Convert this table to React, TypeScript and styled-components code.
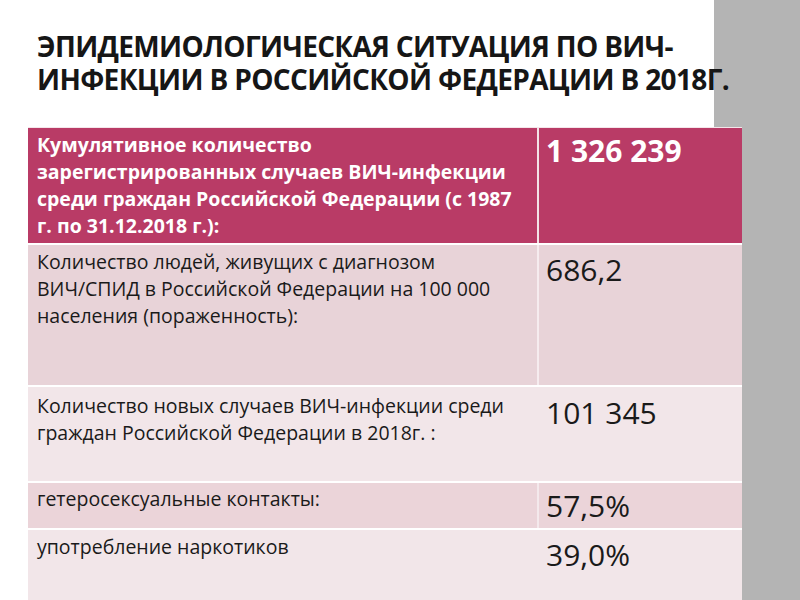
import React from "react";
import styled, { createGlobalStyle } from "styled-components";

const Global = createGlobalStyle`
  html, body { margin: 0; padding: 0; }
  body {
    width: 800px;
    height: 600px;
    overflow: hidden;
    font-family: "Open Sans", "DejaVu Sans", sans-serif;
    background: linear-gradient(to right, #ffffff 0, #ffffff 714px, #b4b4b4 714px, #b4b4b4 100%);
  }
`;

const Slide = styled.div`
  width: 800px;
  height: 600px;
  display: flex;
  flex-direction: column;
  padding: 30px 0 0 28px;
  box-sizing: border-box;
`;

const Title = styled.h1`
  margin: 0 0 31px 9px;
  font-family: "Open Sans", sans-serif;
  font-weight: 700;
  font-size: 28px;
  line-height: 33px;
  font-stretch: 92%;
  letter-spacing: -0.65px;
  color: #161616;
  text-transform: uppercase;
  white-space: nowrap;
`;

const Table = styled.div`
  width: 714px;
  display: flex;
  flex-direction: column;
  gap: 2px;
  background: #ffffff;
  border-top: 1px solid #f4e6ea;
`;

const Row = styled.div<{ $bg: string; $h: number }>`
  display: grid;
  grid-template-columns: 511px 1fr;
  height: ${(p) => p.$h}px;
  background: ${(p) => p.$bg};
`;

const Label = styled.div<{ $head?: boolean; $line: string; $pt: number }>`
  padding: ${(p) => p.$pt}px 8px 0 9px;
  border-right: 2px solid ${(p) => p.$line};
  font-size: 19.5px;
  line-height: 27px;
  font-weight: ${(p) => (p.$head ? 700 : 400)};
  color: ${(p) => (p.$head ? "#ffffff" : "#1a1a1a")};
`;

const Value = styled.div<{ $head?: boolean; $pt: number }>`
  padding: ${(p) => p.$pt}px 8px 0 7px;
  font-size: 30px;
  line-height: 40px;
  font-weight: ${(p) => (p.$head ? 700 : 400)};
  color: ${(p) => (p.$head ? "#ffffff" : "#1a1a1a")};
`;

const rows = [
  {
    head: true,
    bg: "#b93b66",
    line: "#f3e2e7",
    h: 115,
    lp: 3,
    vp: 3,
    label:
      "Кумулятивное количество зарегистрированных случаев ВИЧ-инфекции среди граждан Российской Федерации (с 1987 г. по 31.12.2018 г.):",
    value: "1 326 239",
  },
  {
    bg: "#e8d3d8",
    line: "#f6ecef",
    h: 140,
    lp: 3,
    vp: 5,
    label:
      "Количество людей, живущих с диагнозом ВИЧ/\u2060СПИД в Российской Федерации на 100 000 населения (пораженность):",
    value: "686,2",
  },
  {
    bg: "#f2e6e9",
    line: "#f2e6e9",
    h: 94,
    lp: 5,
    vp: 6,
    label: "Количество новых случаев ВИЧ-инфекции среди граждан Российской Федерации в 2018г. :",
    value: "101 345",
  },
  {
    bg: "#ebd4d9",
    line: "#f4e9ec",
    h: 45,
    lp: 2,
    vp: 3,
    label: "гетеросексуальные контакты:",
    value: "57,5%",
  },
  {
    bg: "#f2e6e9",
    line: "#f2e6e9",
    h: 80,
    lp: 3,
    vp: 5,
    label: "употребление наркотиков",
    value: "39,0%",
  },
];

export default function App() {
  return (
    <>
      <Global />
      <Slide>
        <Title>
          Эпидемиологическая ситуация по ВИЧ-
          <br />
          инфекции в Российской Федерации в 2018г.
        </Title>
        <Table>
          {rows.map((r, i) => (
            <Row key={i} $bg={r.bg} $h={r.h}>
              <Label $head={r.head} $line={r.line} $pt={r.lp}>
                {r.label}
              </Label>
              <Value $head={r.head} $pt={r.vp}>
                {r.value}
              </Value>
            </Row>
          ))}
        </Table>
      </Slide>
    </>
  );
}
